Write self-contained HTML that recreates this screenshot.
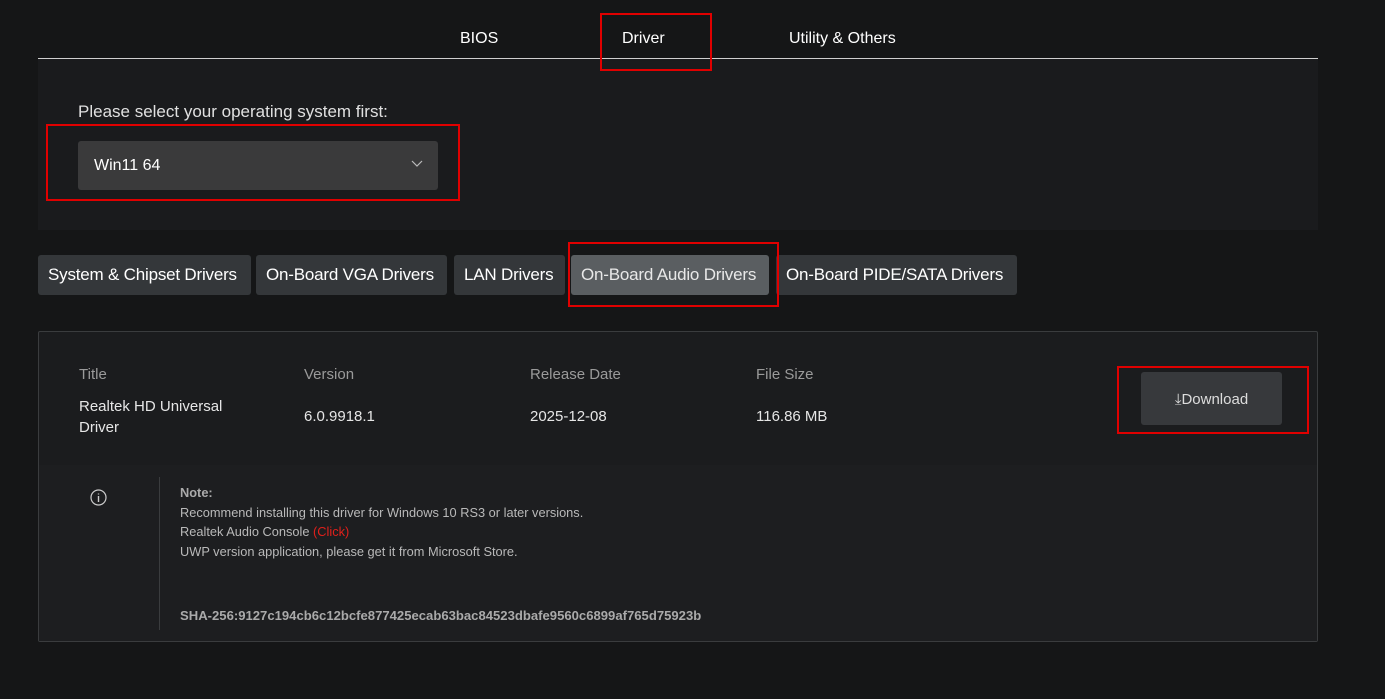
<!DOCTYPE html>
<html><head><meta charset="utf-8"><style>
*{margin:0;padding:0;box-sizing:border-box}
body{width:1385px;height:699px;background:#151617;font-family:"Liberation Sans",sans-serif;position:relative;overflow:hidden;color:#fff}
.a{position:absolute}
.red{position:absolute;border:2px solid #e00000}
.tab{position:absolute;top:30px;font-size:16px;color:#fff}
.btn{position:absolute;top:255px;height:40px;background:#34373a;border-radius:3px;color:#fff;font-size:17px;line-height:40px;padding:0 10px;white-space:nowrap;letter-spacing:-0.2px}
.lbl{position:absolute;top:366px;font-size:15px;color:#9a9a9a}
.val{position:absolute;font-size:15px;color:#e6e6e6}
.note{position:absolute;left:180px;font-size:12.8px;color:#b9b9b9}
</style></head><body>
<div class="a" style="left:38px;top:58px;width:1280px;height:172px;background:#1a1b1d"></div>
<div class="a" style="left:38px;top:58px;width:1280px;height:1px;background:#cfcfcf"></div>
<div class="tab" style="left:460px">BIOS</div>
<div class="tab" style="left:622px">Driver</div>
<div class="tab" style="left:789px">Utility &amp; Others</div>
<div class="red" style="left:600px;top:13px;width:112px;height:58px"></div>
<div class="a" style="left:78px;top:102px;font-size:17px;color:#e0e0e0">Please select your operating system first:</div>
<div class="a" style="left:78px;top:141px;width:360px;height:49px;background:#3a3a3b;border-radius:3px"></div>
<div class="a" style="left:94px;top:157px;font-size:16px;color:#fff">Win11 64</div>
<svg class="a" style="left:410px;top:159px" width="14" height="10"><path d="M2 2l5 5 5-5" stroke="#bbb" fill="none" stroke-width="1.2"/></svg>
<div class="red" style="left:46px;top:124px;width:414px;height:77px"></div>
<div class="btn" style="left:38px;width:213px">System &amp; Chipset Drivers</div>
<div class="btn" style="left:256px;width:191px">On-Board VGA Drivers</div>
<div class="btn" style="left:454px;width:111px">LAN Drivers</div>
<div class="btn" style="left:571px;width:198px;background:#5a5e61;color:#e8e8e8">On-Board Audio Drivers</div>
<div class="btn" style="left:776px;width:241px">On-Board PIDE/SATA Drivers</div>
<div class="red" style="left:568px;top:242px;width:211px;height:65px"></div>
<div class="a" style="left:38px;top:331px;width:1280px;height:311px;background:#1b1c1e;border:1px solid #3a3c3e;border-radius:2px"></div>
<div class="a" style="left:39px;top:465px;width:1278px;height:176px;background:#1d1e20"></div>
<div class="lbl" style="left:79px">Title</div>
<div class="lbl" style="left:304px">Version</div>
<div class="lbl" style="left:530px">Release Date</div>
<div class="lbl" style="left:756px">File Size</div>
<div class="val" style="left:79px;top:396px;line-height:21px">Realtek HD Universal<br>Driver</div>
<div class="val" style="left:304px;top:408px">6.0.9918.1</div>
<div class="val" style="left:530px;top:408px">2025-12-08</div>
<div class="val" style="left:756px;top:408px">116.86 MB</div>
<div class="a" style="left:1141px;top:372px;width:141px;height:53px;background:#37393c;border-radius:3px;color:#ddd;font-size:15px;line-height:55px;text-align:center">⤓Download</div>
<div class="red" style="left:1117px;top:366px;width:192px;height:68px"></div>
<svg class="a" style="left:89px;top:488px" width="19" height="19"><circle cx="9.5" cy="9.5" r="7.5" stroke="#ccc" fill="none" stroke-width="1.2"/><path d="M9.5 8v6M9.5 5.5v1" stroke="#ccc" stroke-width="1.4"/></svg>
<div class="a" style="left:159px;top:477px;width:1px;height:153px;background:#3a3c3e"></div>
<div class="note" style="top:485px;font-weight:bold;color:#aaa">Note:</div>
<div class="note" style="top:505px">Recommend installing this driver for Windows 10 RS3 or later versions.</div>
<div class="note" style="top:524px">Realtek Audio Console <span style="color:#e0201b">(Click)</span></div>
<div class="note" style="top:544px">UWP version application, please get it from Microsoft Store.</div>
<div class="note" style="top:608px;font-weight:bold;color:#aaa;font-size:13.1px">SHA-256:9127c194cb6c12bcfe877425ecab63bac84523dbafe9560c6899af765d75923b</div>
</body></html>
